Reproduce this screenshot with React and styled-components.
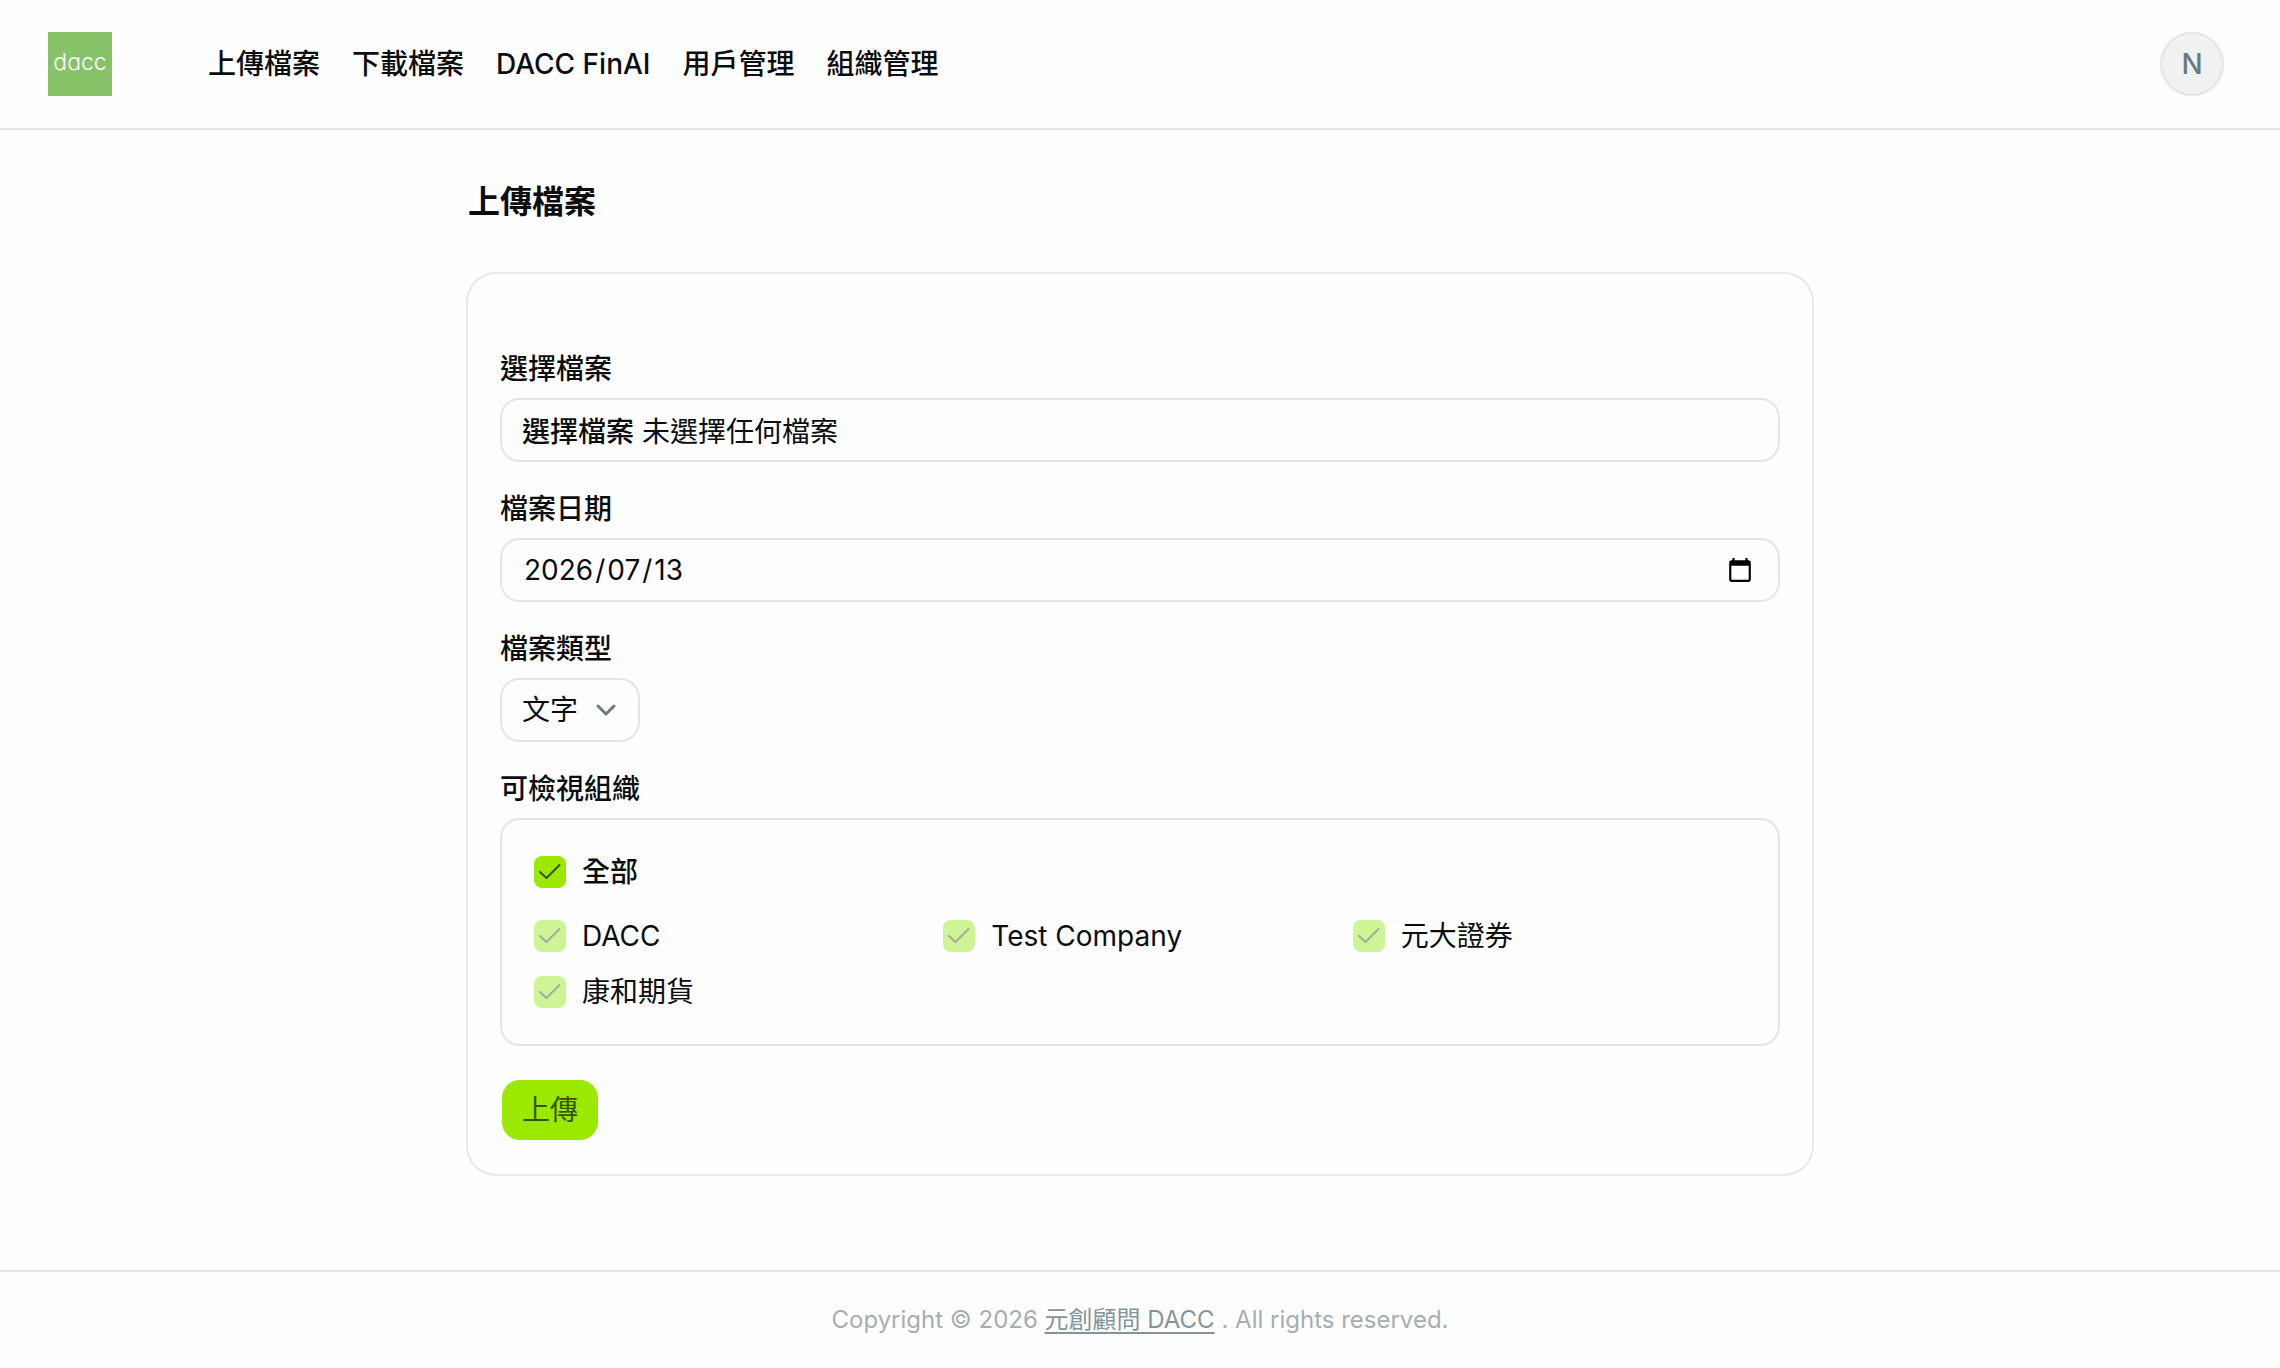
import React, { Fragment, useState } from "react";
import styled, { createGlobalStyle } from "styled-components";

const navItems = ["上傳檔案", "下載檔案", "DACC FinAI", "用戶管理", "組織管理"];
const organizations = ["DACC", "Test Company", "元大證券", "康和期貨"];
const dateParts = ["年", "月", "日"];

function CheckBox({ id, ...rest }) {
    return (
        <CheckBoxWrap>
            <CheckInput type="checkbox" id={id} {...rest} />
            <CheckMark viewBox="0 0 32 32" aria-hidden="true">
                <path d="M6 16L12.5 22L25.5 9" />
            </CheckMark>
        </CheckBoxWrap>
    );
}

function Header() {
    return (
        <HeaderBar>
            <Logo href="#">dacc</Logo>
            <Nav>
                {navItems.map((item) => (
                    <NavLink href="#" key={item}>
                        {item}
                    </NavLink>
                ))}
            </Nav>
            <Avatar type="button">N</Avatar>
        </HeaderBar>
    );
}

function UploadForm() {
    const [fileName, setFileName] = useState("");
    const [date, setDate] = useState(["2026", "07", "13"]);
    const [all, setAll] = useState(true);
    const [selected, setSelected] = useState([]);

    const toggle = (name) => {
        setSelected(
            selected.includes(name)
                ? selected.filter((item) => item !== name)
                : [...selected, name]
        );
    };

    const changeDate = (index, value) => {
        setDate(date.map((part, i) => (i === index ? value : part)));
    };

    return (
        <Card onSubmit={(e) => e.preventDefault()}>
            <Message role="status" />
            <Field>
                <Label htmlFor="file">選擇檔案</Label>
                <FileBox>
                    <FileInput
                        type="file"
                        id="file"
                        onChange={(e) => setFileName(e.target.files[0]?.name)}
                    />
                    <FileButton>選擇檔案</FileButton>
                    <span>{fileName || "未選擇任何檔案"}</span>
                </FileBox>
            </Field>
            <Field>
                <Label htmlFor="date-0">檔案日期</Label>
                <DateBox>
                    {dateParts.map((part, i) => (
                        <Fragment key={part}>
                            {i > 0 && <span>/</span>}
                            <DateInput
                                type="text"
                                inputMode="numeric"
                                id={`date-${i}`}
                                aria-label={`檔案日期 ${part}`}
                                maxLength={i === 0 ? 4 : 2}
                                value={date[i]}
                                onChange={(e) => changeDate(i, e.target.value)}
                            />
                        </Fragment>
                    ))}
                    <CalendarButton type="button" aria-label="選擇日期">
                        <svg width="26" height="26" viewBox="0 0 24 24">
                            <path d="M20 3h-1V1h-2v2H7V1H5v2H4c-1.1 0-2 .9-2 2v16c0 1.1.9 2 2 2h16c1.1 0 2-.9 2-2V5c0-1.1-.9-2-2-2zm0 18H4V8h16v13z" />
                        </svg>
                    </CalendarButton>
                </DateBox>
            </Field>
            <Field>
                <Label htmlFor="type">檔案類型</Label>
                <SelectWrap>
                    <Select id="type">
                        <option>文字</option>
                    </Select>
                    <Chevron viewBox="0 0 20 12" aria-hidden="true">
                        <path d="M2 2L10 10L18 2" />
                    </Chevron>
                </SelectWrap>
            </Field>
            <Field as="fieldset">
                <Label as="legend">可檢視組織</Label>
                <OrgBox>
                    <OrgRow htmlFor="org-all" $bold>
                        <CheckBox
                            id="org-all"
                            checked={all}
                            onChange={() => setAll(!all)}
                        />
                        全部
                    </OrgRow>
                    <OrgGrid>
                        {organizations.map((name, i) => (
                            <OrgRow htmlFor={`org-${i}`} key={name}>
                                <CheckBox
                                    id={`org-${i}`}
                                    checked={all || selected.includes(name)}
                                    disabled={all}
                                    onChange={() => toggle(name)}
                                />
                                {name}
                            </OrgRow>
                        ))}
                    </OrgGrid>
                </OrgBox>
            </Field>
            <Submit type="submit">上傳</Submit>
        </Card>
    );
}

function App() {
    return (
        <Page>
            <GlobalStyle />
            <Header />
            <Main>
                <Title>上傳檔案</Title>
                <UploadForm />
            </Main>
            <Footer>
                <p>
                    Copyright © 2026 <a href="#">元創顧問 DACC</a> . All rights
                    reserved.
                </p>
            </Footer>
        </Page>
    );
}

export default App;

const GlobalStyle = createGlobalStyle`
    * {
        box-sizing: border-box;
        margin: 0;
        padding: 0;
    }
    body {
        background: #fefefe;
        color: #0b0d0e;
        font-family: Inter, "Noto Sans CJK TC", sans-serif;
        font-size: 28px;
        line-height: 40px;
    }
    button, input, select {
        font: inherit;
        color: inherit;
    }
`;
const Page = styled.div`
    min-height: 100vh;
    display: flex;
    flex-direction: column;
`;
const HeaderBar = styled.header`
    display: flex;
    align-items: center;
    padding: 32px 56px 32px 48px;
    border-bottom: 2px solid #e2e6e9;
`;
const Logo = styled.a`
    width: 64px;
    height: 64px;
    display: flex;
    align-items: center;
    justify-content: center;
    padding-bottom: 4px;
    background: #88c268;
    color: #fff;
    font-size: 23px;
    font-weight: 300;
    font-feature-settings: "cv11";
    text-decoration: none;
`;
const Nav = styled.nav`
    flex: 1;
    display: flex;
    gap: 32px;
    margin-left: 96px;
`;
const NavLink = styled.a`
    color: inherit;
    font-weight: 500;
    text-decoration: none;
`;
const Avatar = styled.button`
    width: 64px;
    height: 64px;
    border: 2px solid #e2e6e9;
    border-radius: 50%;
    background: #f0f2f2;
    color: #697b80;
    font-weight: 500;
`;
const Main = styled.main`
    flex: 1;
    width: 100%;
    max-width: 1344px;
    margin: 0 auto;
    padding: 48px 0 96px;
`;
const Title = styled.h1`
    margin-bottom: 48px;
    font-size: 32px;
    line-height: 48px;
    font-weight: 600;
`;
const Card = styled.form`
    padding: 32px;
    border-radius: 28px;
    box-shadow: 0 0 0 2px #e9e9e9;
`;
const Message = styled.div`
    height: 43px;
`;
const Field = styled.div`
    border: 0;
    margin-bottom: 27px;
`;
const Label = styled.label`
    display: block;
    margin-bottom: 9px;
    font-weight: 500;
`;
const Box = styled.div`
    border: 2px solid #e2e6e9;
    border-radius: 20px;
`;
const FileBox = styled(Box).attrs({ as: "label", htmlFor: "file" })`
    display: flex;
    align-items: center;
    gap: 8px;
    height: 64px;
    padding: 4px 20px 0;
`;
const FileInput = styled.input`
    position: absolute;
    width: 1px;
    height: 1px;
    opacity: 0;
`;
const FileButton = styled.span`
    font-weight: 500;
`;
const DateBox = styled(Box)`
    display: flex;
    align-items: center;
    height: 64px;
    padding: 0 25px 0 20px;
`;
const DateInput = styled.input`
    field-sizing: content;
    padding: 0 2px;
    border: 0;
    outline: 0;
    background: none;
`;
const CalendarButton = styled.button`
    display: flex;
    margin-left: auto;
    border: 0;
    background: none;
    cursor: pointer;
`;
const SelectWrap = styled.div`
    display: inline-grid;
    align-items: center;
    vertical-align: top;
`;
const Select = styled.select`
    grid-area: 1 / 1;
    height: 64px;
    padding: 0 59px 0 20px;
    border: 2px solid #e2e6e9;
    border-radius: 20px;
    background: none;
    appearance: none;
`;
const Chevron = styled.svg`
    grid-area: 1 / 1;
    justify-self: end;
    width: 20px;
    height: 12px;
    margin-right: 24px;
    fill: none;
    stroke: #697b80;
    stroke-width: 3;
    stroke-linecap: round;
    stroke-linejoin: round;
    pointer-events: none;
`;
const OrgBox = styled(Box)`
    display: flex;
    flex-direction: column;
    gap: 24px;
    padding: 32px;
`;
const OrgGrid = styled.div`
    display: grid;
    grid-template-columns: repeat(3, 1fr);
    gap: 16px;
`;
const OrgRow = styled.label`
    display: flex;
    align-items: center;
    gap: 16px;
    font-weight: ${(props) => (props.$bold ? 500 : 400)};
`;
const CheckBoxWrap = styled.span`
    display: grid;
`;
const CheckInput = styled.input`
    grid-area: 1 / 1;
    width: 32px;
    height: 32px;
    border: 2px solid #e2e6e9;
    border-radius: 8px;
    appearance: none;
    &:checked {
        border: 0;
        background: #9be900;
    }
    &:checked:disabled {
        background: #cdf495;
    }
`;
const CheckMark = styled.svg`
    grid-area: 1 / 1;
    width: 32px;
    height: 32px;
    fill: none;
    stroke: #37520b;
    stroke-width: 2;
    stroke-linecap: round;
    stroke-linejoin: round;
    pointer-events: none;
    input:disabled + & {
        stroke: #a2ab98;
    }
    input:not(:checked) + & {
        visibility: hidden;
    }
`;
const Submit = styled.button`
    display: block;
    height: 64px;
    margin-top: 32px;
    padding: 0 20px;
    border: 2px solid transparent;
    border-radius: 20px;
    background: #9be900;
    background-clip: padding-box;
    color: #37520b;
    cursor: pointer;
`;
const Footer = styled.footer`
    padding: 28px;
    border-top: 2px solid #e2e6e9;
    color: #a5afb0;
    font-size: 24px;
    text-align: center;
    a {
        color: #84959a;
        text-decoration: underline;
        text-decoration-thickness: 2px;
        text-decoration-skip-ink: none;
        text-underline-offset: 4px;
    }
`;
